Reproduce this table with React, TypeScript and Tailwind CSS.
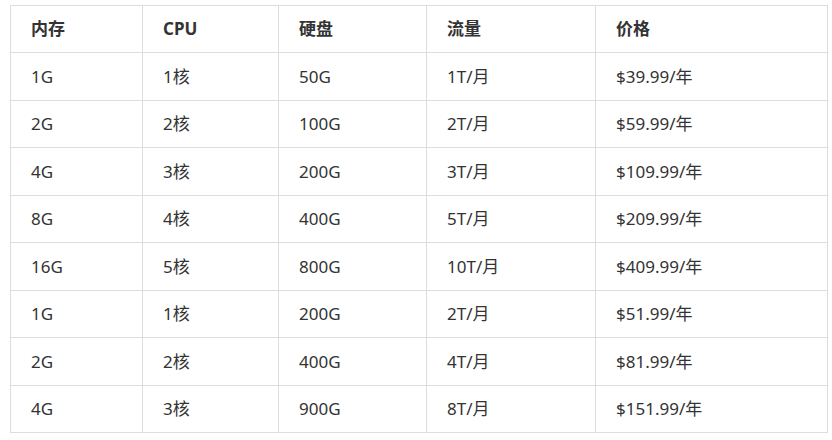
const headers = ["内存", "CPU", "硬盘", "流量", "价格"];

const rows = [
  ["1G", "1核", "50G", "1T/月", "$39.99/年"],
  ["2G", "2核", "100G", "2T/月", "$59.99/年"],
  ["4G", "3核", "200G", "3T/月", "$109.99/年"],
  ["8G", "4核", "400G", "5T/月", "$209.99/年"],
  ["16G", "5核", "800G", "10T/月", "$409.99/年"],
  ["1G", "1核", "200G", "2T/月", "$51.99/年"],
  ["2G", "2核", "400G", "4T/月", "$81.99/年"],
  ["4G", "3核", "900G", "8T/月", "$151.99/年"],
];

const widths = ["w-[132px]", "w-[136px]", "w-[148px]", "w-[169px]", "w-[232px]"];

export default function App() {
  return (
    <div
      className="w-[832px] h-[440px] bg-white pt-[5px] pl-[10px] text-[#333] overflow-hidden"
      style={{ fontFamily: '"Noto Sans", "Noto Sans CJK SC", sans-serif' }}
    >
      <table className="border-collapse w-[818px] table-fixed text-[17px]">
        <thead>
          <tr>
            {headers.map((h, i) => (
              <th
                key={h}
                className={`${widths[i]} h-[47px] border border-[#ddd] px-5 text-left font-bold`}
              >
                {h}
              </th>
            ))}
          </tr>
        </thead>
        <tbody>
          {rows.map((r, ri) => (
            <tr key={ri}>
              {r.map((c, ci) => (
                <td key={ci} className="h-[47.5px] border border-[#ddd] px-5">
                  {c}
                </td>
              ))}
            </tr>
          ))}
        </tbody>
      </table>
    </div>
  );
}
